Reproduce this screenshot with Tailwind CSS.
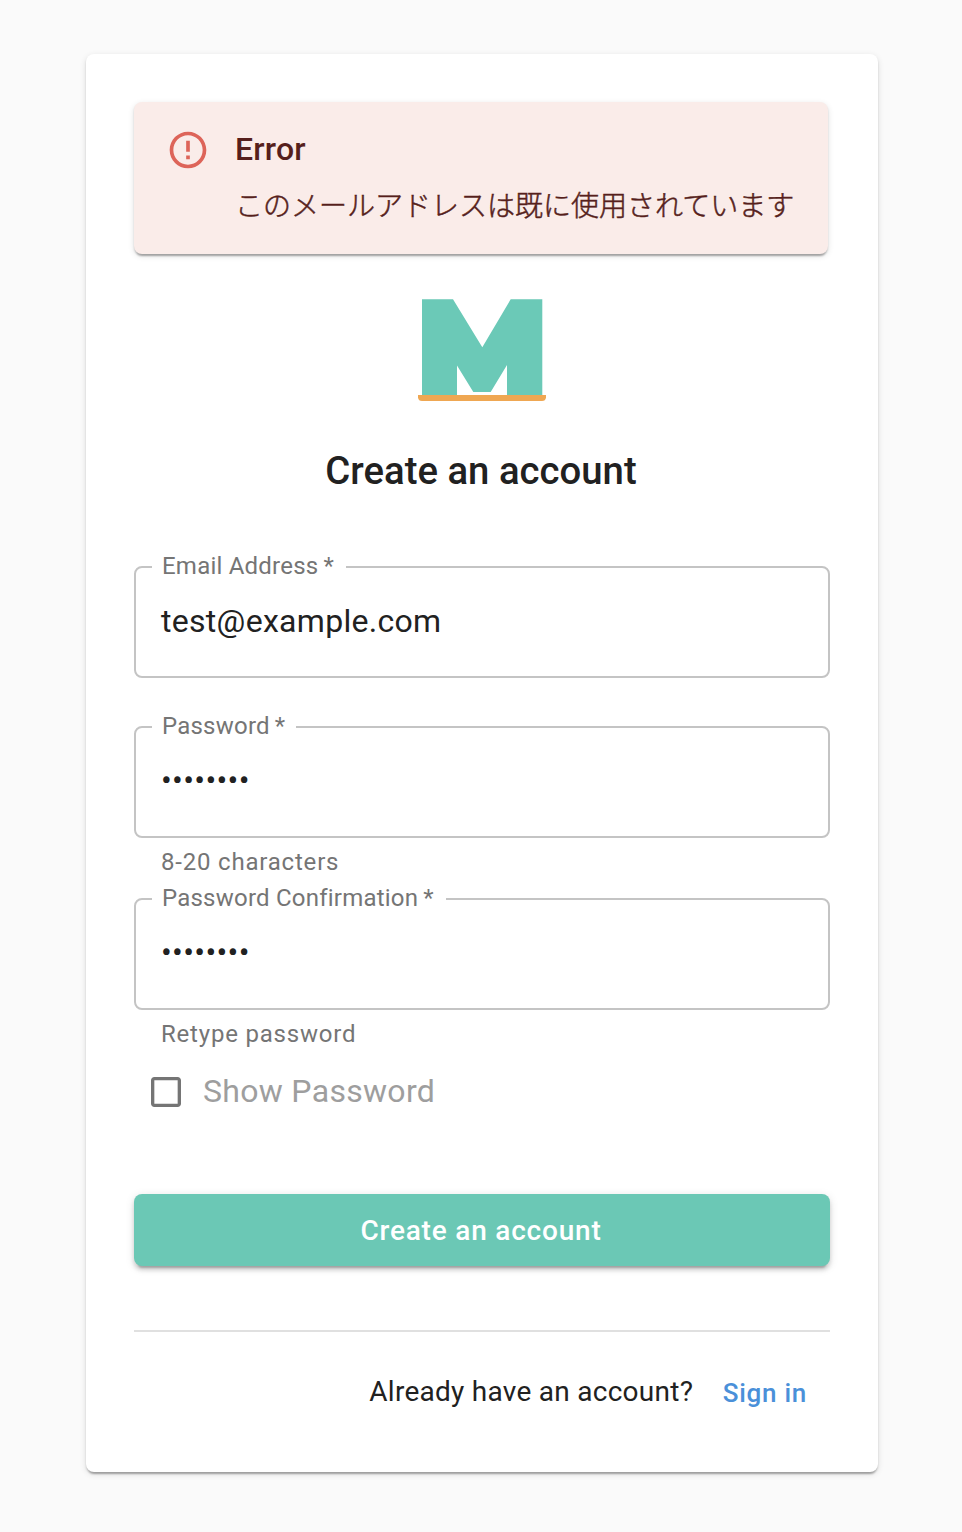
<!DOCTYPE html>
<html lang="ja">
<head>
<meta charset="utf-8">
<title>Create an account</title>
<script src="https://cdn.jsdelivr.net/npm/@tailwindcss/browser@4"></script>
</head>
<body class="bg-[#fafafa] font-[Roboto,'Noto_Sans_CJK_JP',sans-serif] text-[#212121]">
<main class="flex min-h-[1532px] justify-center pt-[54px] pb-[60px] pl-0.5">
  <div class="flex h-[1418px] w-[792px] flex-col rounded-lg bg-white px-12 pt-12 shadow-[0_4px_2px_-2px_rgba(0,0,0,0.2),0_2px_2px_0_rgba(0,0,0,0.14),0_2px_6px_0_rgba(0,0,0,0.12)]">

    <div role="alert" class="flex h-[152px] w-[694px] rounded-lg bg-[#faece9] pl-8 text-[#561f1c] shadow-[0_4px_2px_-2px_rgba(0,0,0,0.2),0_2px_2px_0_rgba(0,0,0,0.14),0_2px_6px_0_rgba(0,0,0,0.12)]">
      <svg class="mt-[26px] mr-[25px] size-11 shrink-0" viewBox="0 0 24 24" fill="#dd6459"><path d="M11 15h2v2h-2zm0-8h2v6h-2zm.99-5C6.47 2 2 6.48 2 12s4.47 10 9.99 10C17.52 22 22 17.52 22 12S17.52 2 11.99 2zM12 20c-4.42 0-8-3.58-8-8s3.58-8 8-8 8 3.58 8 8-3.58 8-8 8z"/></svg>
      <div class="pt-[23px]">
        <div class="text-[32px] leading-[48px] font-medium tracking-[0.2px]">Error</div>
        <div class="mt-3.5 text-[28px] leading-10 font-light whitespace-nowrap [-webkit-text-stroke:0.5px_#561f1c]">このメールアドレスは既に使用されています</div>
      </div>
    </div>

    <svg class="mt-[44px] ml-[284px] h-[104px] w-32 shrink-0" viewBox="418 298 128 104">
      <path fill="#6bc9b7" d="M422 299.3H453L482.3 347.3L510.7 299.3H542.3V396H507V365L490.7 392H473.3L457 365.6V396H422Z"/>
      <path fill="#efa752" d="M418 395H546V397.5Q545.5 401 542 401H422Q418.5 401 418 397.5Z"/>
    </svg>

    <h1 class="mt-[41px] pr-0.5 text-center text-[38.300px] leading-[56px] font-medium">Create an account</h1>

    <form class="flex flex-col">
      <fieldset class="mt-[54px] h-[125px] rounded-lg border-2 border-[#c4c4c4] pl-4">
        <legend class="h-7 pr-3 pl-2.5 text-2xl leading-[26px] tracking-[0.22px] text-[#757575]">Email Address<span class="ml-[5px]">*</span></legend>
        <div class="mt-[21px] pl-[9px] text-[32px] leading-[38px] tracking-[0.3px]">test@example.com</div>
      </fieldset>

      <fieldset class="mt-[35px] h-[125px] rounded-lg border-2 border-[#c4c4c4] pl-4">
        <legend class="h-7 pr-[11px] pl-2.5 text-2xl leading-[26px] tracking-[0.22px] text-[#757575]">Password<span class="ml-[5px]">*</span></legend>
        <div class="mt-[20px] pl-[9px] text-[32px] leading-[38px] tracking-[0.3px]">••••••••</div>
      </fieldset>
      <p class="mt-2 h-10 pl-[27px] text-2xl leading-8 tracking-[0.8px] text-[#757575]">8-20 characters</p>

      <fieldset class="-mt-[1px] h-[125px] rounded-lg border-2 border-[#c4c4c4] pl-4">
        <legend class="h-7 pr-3 pl-2.5 text-2xl leading-[26px] tracking-[0.22px] text-[#757575]">Password Confirmation<span class="ml-[5px]">*</span></legend>
        <div class="mt-[20px] pl-[9px] text-[32px] leading-[38px] tracking-[0.3px]">••••••••</div>
      </fieldset>
      <p class="mt-2 h-10 pl-[27px] text-2xl leading-8 tracking-[0.8px] text-[#757575]">Retype password</p>

      <label class="mt-2.5 flex h-12 items-center pl-3">
        <svg class="size-10" viewBox="0 0 24 24" fill="#757575"><path d="M19 5v14H5V5h14m0-2H5c-1.100 0-2 .9-2 2v14c0 1.100.9 2 2 2h14c1.100 0 2-.9 2-2V5c0-1.100-.9-2-2-2z"/></svg>
        <span class="ml-[17px] pb-0.5 text-[32px] leading-12 tracking-[0.3px] text-[#9e9e9e]">Show Password</span>
      </label>

      <button type="button" class="mt-[78px] h-[72px] rounded-lg bg-[#6bc8b5] pt-px pr-0.5 text-[28px] font-medium tracking-[0.8px] text-white shadow-[0_6px_2px_-4px_rgba(0,0,0,0.2),0_4px_4px_0_rgba(0,0,0,0.14),0_2px_10px_0_rgba(0,0,0,0.12)]">Create an account</button>
    </form>

    <hr class="mt-16 border-t-2 border-[#e0e0e0]">

    <div class="mt-9 flex justify-end pr-[23px]">
      <span class="text-[28px] leading-12 tracking-[0.27px]">Already have an account?</span>
      <a class="ml-[29.500px] pt-px text-[26px] leading-12 font-medium tracking-[0.73px] text-[#4a90d9]">Sign in</a>
    </div>
  </div>
</main>
</body>
</html>
